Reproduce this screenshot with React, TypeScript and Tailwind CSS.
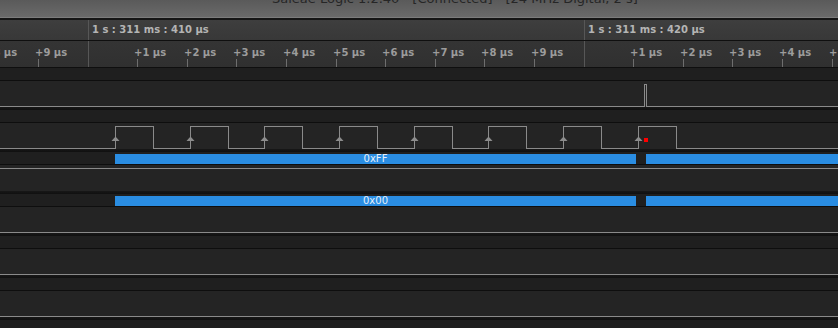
import React from "react";

const US = 49.6;

// ruler segments: origin pixel of each time marker, first label index
const segments = [
  { origin: -408, from: 7 },
  { origin: 88, from: 1 },
  { origin: 584, from: 1 },
];

const ticks = segments.flatMap((s) =>
  Array.from({ length: 10 - s.from }, (_, i) => {
    const n = s.from + i;
    return { x: Math.floor(s.origin + n * US), label: `+${n} µs` };
  })
).filter((t) => t.x > -40 && t.x < 850);

const rises = Array.from({ length: 8 }, (_, i) => Math.round(115 + i * 74.67));

const clockPoints = (() => {
  const pts: string[] = ["0,25.5"];
  rises.forEach((r) => {
    const f = r + 38;
    pts.push(`${r + 0.5},25.5`, `${r + 0.5},3.5`, `${f + 0.5},3.5`, `${f + 0.5},25.5`);
  });
  pts.push("838,25.5");
  return pts.join(" ");
})();

type Channel = {
  points: string;
  bars?: string;
  clock?: boolean;
};

const channels: Channel[] = [
  { points: "0,25.5 644.5,25.5 644.5,3.5 646.5,3.5 646.5,25.5 838,25.5" },
  { points: clockPoints, clock: true },
  { points: "0,3.5 838,3.5", bars: "0xFF" },
  { points: "0,25.5 838,25.5", bars: "0x00" },
  { points: "0,25.5 838,25.5" },
  { points: "0,25.5 838,25.5" },
  { points: "0,25.5 838,25.5" },
];

const TitleBar = () => (
  <div className="h-[20px] flex flex-col">
    <div className="h-[17px] overflow-hidden bg-gradient-to-b from-[#5a5a5a] to-[#6a6a6a]">
      <div className="pl-[272px] -mt-[9px] text-[13px] leading-[16px] text-[#262626] whitespace-nowrap">
        Saleae Logic 1.2.40 - [Connected] - [24 MHz Digital, 2 s]
      </div>
    </div>
    <div className="h-px bg-[#7c7c7c]" />
    <div className="h-[2px] bg-[#151515]" />
  </div>
);

const Ruler = () => (
  <div className="flex flex-col">
    <div className="relative h-[20px] bg-gradient-to-b from-[#3e3e3e] to-[#383838]">
      <div className="absolute left-[88px] top-0 bottom-0 w-px bg-[#575757]" />
      <div className="absolute left-[584px] top-0 bottom-0 w-px bg-[#575757]" />
      <span className="absolute left-[92px] top-[4px] text-[10px] leading-[12px] font-bold text-[#b4b4b4] whitespace-nowrap">
        1 s : 311 ms : 410 µs
      </span>
      <span className="absolute left-[588px] top-[4px] text-[10px] leading-[12px] font-bold text-[#b4b4b4] whitespace-nowrap">
        1 s : 311 ms : 420 µs
      </span>
    </div>
    <div className="h-px bg-[#0f0f0f]" />
    <div className="relative h-[26px] bg-gradient-to-b from-[#343434] to-[#303030]">
      <div className="absolute left-[88px] top-0 bottom-0 w-px bg-[#575757]" />
      <div className="absolute left-[584px] top-0 bottom-0 w-px bg-[#575757]" />
      {ticks.map((t) => (
        <React.Fragment key={t.label + t.x}>
          <span
            className="absolute top-[6px] text-[10px] leading-[12px] font-bold text-[#9c9c9c] whitespace-nowrap"
            style={{ left: t.x - 3 }}
          >
            {t.label}
          </span>
          <div className="absolute bottom-0 h-[8px] w-px bg-[#6e6e6e]" style={{ left: t.x }} />
        </React.Fragment>
      ))}
    </div>
    <div className="h-px bg-[#0f0f0f]" />
  </div>
);

const ChannelRow = ({ ch }: { ch: Channel }) => (
  <div className="flex flex-col shrink-0">
    <div className="relative h-[12px] bg-[#1f1f1f]">
      {ch.bars && (
        <>
          <div className="absolute left-[115px] w-[521px] top-[2px] h-[10px] bg-[#2a8de2] flex items-center justify-center text-[10px] leading-[10px] text-[#e6f0fa]">
            {ch.bars}
          </div>
          <div className="absolute left-[646px] right-0 top-[2px] h-[10px] bg-[#2a8de2]" />
        </>
      )}
    </div>
    <div className="h-px bg-[#0e0e0e]" />
    <div className="h-[26px] bg-[#242424]">
      <svg width="838" height="26" className="block" shapeRendering="crispEdges">
        <polyline points={ch.points} fill="none" stroke="#8a8a8a" strokeWidth="1" />
        {ch.clock &&
          rises.map((r) => (
            <polygon key={r} points={`${r - 3.5},18 ${r + 0.5},13.5 ${r + 4.5},18`} fill="#8c8c8c" shapeRendering="auto" />
          ))}
        {ch.clock && <rect x="644" y="15" width="4" height="4" fill="#ff0000" />}
      </svg>
    </div>
    <div className="h-[3px] bg-gradient-to-b from-[#171717] to-[#101010]" />
  </div>
);

export default function App() {
  return (
    <div className="w-[838px] h-[328px] overflow-hidden bg-[#1f1f1f] font-['DejaVu_Sans',sans-serif] flex flex-col">
      <TitleBar />
      <Ruler />
      {channels.map((ch, i) => (
        <ChannelRow key={i} ch={ch} />
      ))}
    </div>
  );
}
